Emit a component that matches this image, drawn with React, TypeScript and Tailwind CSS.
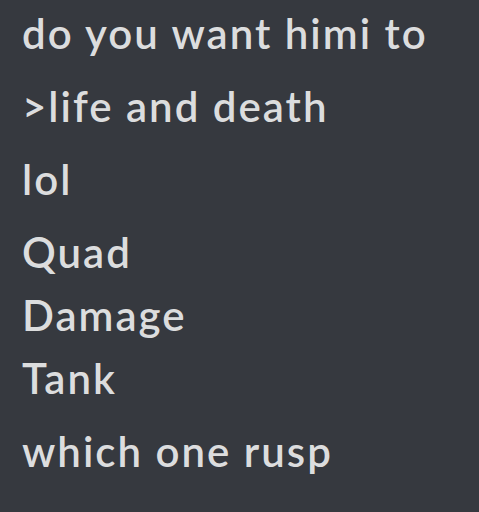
const messages = [
  ["do you want himi to"],
  [">life and death"],
  ["lol"],
  ["Quad", "Damage", "Tank"],
  ["which one rusp"],
];

export default function App() {
  return (
    <div className="h-[512px] w-[479px] overflow-hidden bg-[#36393f] font-['Lato','Noto_Sans',sans-serif] text-[#dcddde]">
      <div className="mt-[2px] flex flex-col gap-[10px] pl-[22px] text-[42px] font-semibold leading-[63px] tracking-[2px]">
        {messages.map((lines, i) => (
          <div key={i}>
            {lines.map((line) => (
              <div key={line}>{line}</div>
            ))}
          </div>
        ))}
      </div>
    </div>
  );
}
